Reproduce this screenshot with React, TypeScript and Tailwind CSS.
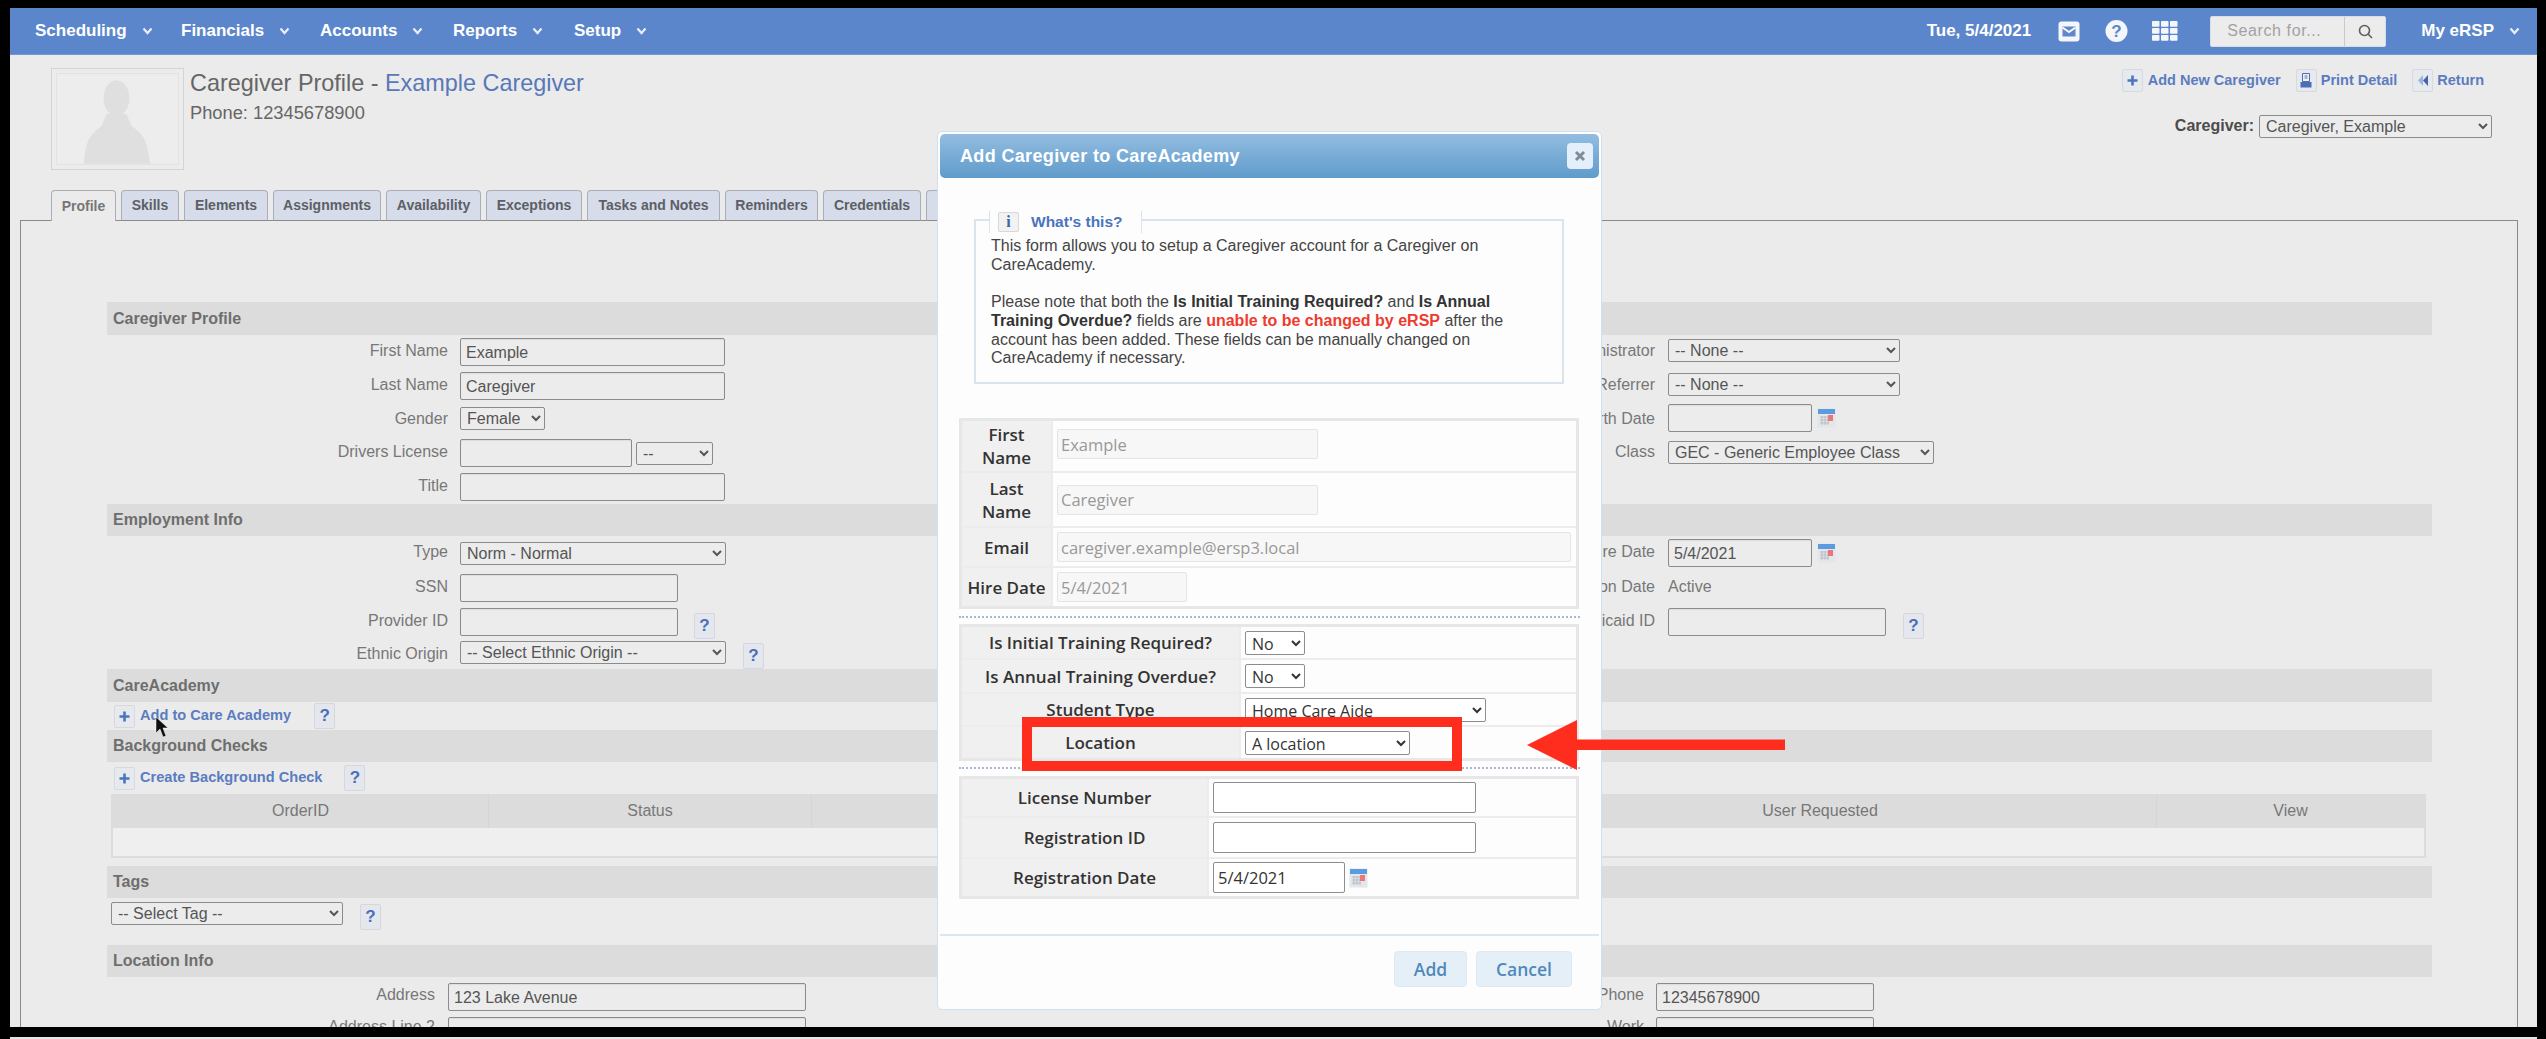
import React from "react";

const Chev = ({ c = "#fff" }: { c?: string }) => (
  <svg width="11" height="8" viewBox="0 0 11 8" className="ml-[15px]">
    <polyline points="1.5,1.5 5.5,6 9.5,1.5" fill="none" stroke={c} strokeWidth="2.2" />
  </svg>
);

const NavItem = ({ t, w }: { t: string; w: string }) => (
  <div className={`flex items-center font-bold text-[17px] text-white ${w}`}>
    <span>{t}</span>
    <Chev c="#e8eef8" />
  </div>
);

const Tab = ({ t, w, active }: { t: string; w: string; active?: boolean }) => (
  <div
    className={`${w} h-[31px] -mb-px flex items-center justify-center rounded-t-[4px] border border-[#a9adb5] text-[14px] font-bold relative ${
      active ? "bg-[#ebebeb] border-b-0 text-[#777] z-10" : "bg-[#d6dce9] border-b-[#8a8a8a] text-[#5c5f66]"
    }`}
  >
    {t}
  </div>
);

const Help = ({ cls = "" }: { cls?: string }) => (
  <span className={`w-[21px] h-[26px] flex items-center justify-center rounded-[2px] border border-[#d4d8de] bg-[#e4e8ee] text-[#4a6fb8] font-bold text-[17px] ${cls}`}>?</span>
);

const PlusBtn = () => (
  <span className="w-[21px] h-[23px] flex items-center justify-center rounded-[2px] border border-[#d6d9de] bg-[#e6e9ee]">
    <svg width="11" height="11" viewBox="0 0 11 11">
      <path d="M4.2 0.5h2.6v3.7h3.7v2.6h-3.7v3.7h-2.6v-3.7h-3.7v-2.6h3.7z" fill="#4a75c0" />
    </svg>
  </span>
);

const Cal = ({ cls = "" }: { cls?: string }) => (
  <svg width="19" height="20" viewBox="0 0 19 20" className={cls}>
    <rect x="0.5" y="0.5" width="18" height="19" fill="#e4e6ea" />
    <rect x="1" y="1" width="17" height="5" fill="#5b9be0" />
    <path d="M3 9h9M3 12h9M3 15h9M5 8v9M8 8v9M11 8v9" stroke="#b9bdc4" strokeWidth="1" />
    <rect x="11" y="7" width="5" height="6" fill="#e8787a" />
  </svg>
);

const Inp = ({ v = "", w, cls = "" }: { v?: string; w: string; cls?: string }) => (
  <input
    readOnly
    defaultValue={v}
    className={`${w} h-[28px] px-[5px] pt-[2px] border border-[#8b8b8b] rounded-[2px] bg-[#ececec] text-[16px] text-[#555] shadow-[inset_0_1px_1px_#ddd] ${cls}`}
  />
);

const Sel = ({ v, w, cls = "" }: { v: string; w: string; cls?: string }) => (
  <select
    defaultValue={v}
    className={`${w} h-[23px] pl-[2px] border border-[#8b8b8b] rounded-[2px] bg-[#ececec] text-[16px] text-[#555] ${cls}`}
  >
    <option>{v}</option>
  </select>
);

const Section = ({ t, h = "h-[32px]" }: { t: string; h?: string }) => (
  <div className={`${h} bg-[#dcdcdc] pl-[6px] flex items-center text-[16px] font-bold text-[#6e6e6e] shrink-0`}>{t}</div>
);

const Row = ({
  h,
  label,
  ctl,
  rlabel,
  rctl,
  lp = "pt-[5px]",
}: {
  h: string;
  label?: string;
  ctl?: React.ReactNode;
  rlabel?: string;
  rctl?: React.ReactNode;
  lp?: string;
}) => (
  <div className={`${h} flex shrink-0`}>
    <div className={`w-[341px] text-right text-[16px] text-[#777] leading-[22px] ${lp}`}>{label}</div>
    <div className="w-[755px] ml-[12px] flex items-start gap-[4px]">{ctl}</div>
    <div className={`w-[440px] text-right text-[16px] text-[#777] leading-[22px] whitespace-nowrap ${lp}`}>{rlabel}</div>
    <div className="ml-[13px] flex items-start">{rctl}</div>
  </div>
);

const MLabel = ({ w, children }: { w: string; children: React.ReactNode }) => (
  <div className={`${w} bg-[#f0f0f0] flex items-center justify-center text-center font-['Open_Sans',sans-serif] font-semibold text-[17px] leading-[23px] text-[#333] shrink-0 whitespace-nowrap`}>
    {children}
  </div>
);

const MInp = ({ v, w, cls = "" }: { v: string; w: string; cls?: string }) => (
  <input
    readOnly
    defaultValue={v}
    className={`${w} h-[30px] px-[3px] rounded-[2px] border border-[#e4e4e4] bg-[#f7f7f7] font-['Open_Sans',sans-serif] text-[16.5px] text-[#999] ${cls}`}
  />
);

const MSel = ({ v, w }: { v: string; w: string }) => (
  <select
    defaultValue={v}
    className={`${w} h-[24px] pl-[2px] border border-[#8d8d8d] rounded-[2px] bg-white font-['Open_Sans',sans-serif] text-[16px] text-[#333]`}
  >
    <option>{v}</option>
  </select>
);

const EditInp = ({ v = "", w }: { v?: string; w: string }) => (
  <input
    readOnly
    defaultValue={v}
    className={`${w} h-[31px] px-[4px] rounded-[2px] border border-[#8d8d8d] bg-white font-['Open_Sans',sans-serif] text-[16.5px] text-[#333]`}
  />
);

const Mrow = ({ h, label, lw, children, last }: { h: string; label: React.ReactNode; lw: string; children: React.ReactNode; last?: boolean }) => (
  <div className={`${h} flex ${last ? "" : "border-b-2 border-[#ececec]"}`}>
    <MLabel w={lw}>{label}</MLabel>
    <div className="flex-1 flex items-center pl-[4px] bg-[#fdfdfd] border-l-2 border-[#ececec]">{children}</div>
  </div>
);

export default function App() {
  return (
    <div className="relative w-[2546px] h-[1039px] overflow-hidden bg-black pt-[8px] pl-[10px] pr-[9px] font-['Liberation_Sans',Arial,sans-serif]">
      <div className="w-full h-[1019px] bg-[#ebebeb] overflow-hidden flex flex-col">
        {/* top bar */}
        <header className="h-[47px] shrink-0 bg-[#5b86cc] flex items-center pl-[25px] pr-[17px] border-b border-[#6f97d4]">
          <NavItem t="Scheduling" w="w-[146px]" />
          <NavItem t="Financials" w="w-[139px]" />
          <NavItem t="Accounts" w="w-[133px]" />
          <NavItem t="Reports" w="w-[121px]" />
          <NavItem t="Setup" w="w-[80px]" />
          <div className="ml-auto flex items-center">
            <span className="font-bold text-[17px] text-white">Tue, 5/4/2021</span>
            <svg width="22" height="21" viewBox="0 0 22 21" className="ml-[27px]">
              <rect x="0.5" y="0.5" width="21" height="20" rx="3" fill="#f4f6fa" />
              <path d="M4.5 5.5h13v10h-13z" fill="#5f88cc" />
              <path d="M4.5 6.5l6.5 4.5 6.5-4.5" fill="none" stroke="#f4f6fa" strokeWidth="2" />
            </svg>
            <svg width="23" height="24" viewBox="0 0 23 24" className="ml-[25px]">
              <circle cx="11.5" cy="12" r="11" fill="#f4f6fa" />
              <text x="11.5" y="18" textAnchor="middle" fontSize="17" fontWeight="700" fill="#5b86cc" fontFamily="Liberation Sans">?</text>
            </svg>
            <svg width="26" height="20" viewBox="0 0 26 20" className="ml-[24px]">
              {[0, 7, 14].map((y) =>
                [0, 9, 18].map((x) => <rect key={`${x}-${y}`} x={x} y={y} width="7.5" height="5.8" rx="0.8" fill="#f4f6fa" />)
              )}
            </svg>
            <div className="ml-[32px] w-[176px] h-[31px] bg-[#ececec] rounded-[2px] flex items-center border border-[#d7dde8]">
              <span className="w-[133px] pl-[16px] text-[16px] text-[#a2a2a2] tracking-[0.6px]">Search for...</span>
              <span className="flex-1 h-full border-l border-[#c9c9c9] flex items-center justify-center">
                <svg width="15" height="15" viewBox="0 0 15 15">
                  <circle cx="6.5" cy="6.5" r="5" fill="none" stroke="#5e5e5e" strokeWidth="1.6" />
                  <path d="M10 10l4 4" stroke="#5e5e5e" strokeWidth="1.6" />
                </svg>
              </span>
            </div>
            <span className="ml-[35px] font-bold text-[17px] text-white">My eRSP</span>
            <Chev c="#e8eef8" />
          </div>
        </header>

        {/* heading */}
        <div className="h-[135px] shrink-0 flex pl-[41px] pr-[45px]">
          <div className="mt-[13px] w-[133px] h-[102px] border border-[#d4d4d4] p-[4px] bg-[#ececec]">
            <div className="w-full h-full border border-[#e2e2e2] overflow-hidden flex justify-center">
              <svg width="122" height="90" viewBox="0 0 122 90">
                <rect width="122" height="90" fill="#ededed" />
                <ellipse cx="60" cy="24" rx="13" ry="18" fill="#dfdfdf" />
                <path d="M27 90C29 70 31 62 45 52L50 40H70L75 52C90 62 91 70 94 90z" fill="#dfdfdf" />
              </svg>
            </div>
          </div>
          <div className="ml-[6px] pt-[14px]">
            <div className="text-[23.4px] leading-[28px] text-[#666] whitespace-nowrap">
              Caregiver Profile - <span className="text-[#5878b8]">Example Caregiver</span>
            </div>
            <div className="text-[18.3px] leading-[22px] text-[#666] mt-[5px]">Phone: 12345678900</div>
          </div>
          <div className="ml-auto flex flex-col items-end">
            <div className="mt-[14px] mr-[8px] flex items-center text-[14.5px] font-bold text-[#5b7cc0] whitespace-nowrap">
              <span className="mr-[5px]"><PlusBtn /></span>
              <span>Add New Caregiver</span>
              <span className="ml-[15px] mr-[4px] w-[21px] h-[23px] flex items-center justify-center rounded-[2px] border border-[#d6d9de] bg-[#e6e9ee]">
                <svg width="12" height="15" viewBox="0 0 12 15">
                  <path d="M2.5 0.5h7v8h-7z" fill="#f2f2f2" stroke="#4a6fb8" />
                  <path d="M4.5 3h3M4.5 5h3" stroke="#4a6fb8" />
                  <rect x="0.5" y="9" width="11" height="5.5" fill="#4a6fb8" />
                </svg>
              </span>
              <span>Print Detail</span>
              <span className="ml-[15px] mr-[4px] w-[21px] h-[23px] flex items-center justify-center rounded-[2px] border border-[#d6d9de] bg-[#e6e9ee]">
                <svg width="12" height="13" viewBox="0 0 12 13">
                  <path d="M6 1L1 6.5 6 12z" fill="#9fb4d8" />
                  <path d="M11 1L6 6.5l5 5.5z" fill="#3f66ad" />
                </svg>
              </span>
              <span>Return</span>
            </div>
            <div className="mt-[22px] flex items-center">
              <span className="text-[16px] font-bold text-[#4c4c4c]">Caregiver:</span>
              <Sel v="Caregiver, Example" w="w-[233px]" cls="ml-[5px]" />
            </div>
          </div>
        </div>

        {/* tabs */}
        <div className="h-[30px] shrink-0 flex gap-[5px] pl-[41px] relative z-10 overflow-visible">
          <Tab t="Profile" w="w-[65px]" active />
          <Tab t="Skills" w="w-[58px]" />
          <Tab t="Elements" w="w-[84px]" />
          <Tab t="Assignments" w="w-[108px]" />
          <Tab t="Availability" w="w-[95px]" />
          <Tab t="Exceptions" w="w-[96px]" />
          <Tab t="Tasks and Notes" w="w-[133px]" />
          <Tab t="Reminders" w="w-[93px]" />
          <Tab t="Credentials" w="w-[98px]" />
          <Tab t="Documents" w="w-[98px]" />
        </div>

        {/* panel */}
        <div className="flex-1 ml-[10px] mr-[19px] border-x border-t border-[#8a8a8a] pt-[81px] pl-[86px] pr-[85px] overflow-hidden flex flex-col min-h-0">
          <Section t="Caregiver Profile" h="h-[33px]" />
          <Row h="h-[34px]" label="First Name" ctl={<Inp v="Example" w="w-[265px]" cls="mt-[3px]" />} rlabel="Administrator" rctl={<Sel v="-- None --" w="w-[232px]" cls="mt-[4px]" />} />
          <Row h="h-[34px]" label="Last Name" ctl={<Inp v="Caregiver" w="w-[265px]" cls="mt-[3px]" />} rlabel="Referrer" rctl={<Sel v="-- None --" w="w-[232px]" cls="mt-[4px]" />} />
          <Row h="h-[33px]" label="Gender" ctl={<Sel v="Female" w="w-[85px]" cls="mt-[4px]" />} rlabel="Birth Date" rctl={<><Inp w="w-[144px]" cls="mt-[1px]" /><Cal cls="ml-[5px] mt-[5px]" /></>} />
          <Row h="h-[34px]" label="Drivers License" ctl={<><Inp w="w-[172px]" cls="mt-[3px]" /><Sel v="--" w="w-[77px]" cls="mt-[6px]" /></>} rlabel="Class" rctl={<Sel v="GEC - Generic Employee Class" w="w-[266px]" cls="mt-[5px]" />} />
          <Row h="h-[34px]" label="Title" ctl={<Inp w="w-[265px]" cls="mt-[3px]" />} />
          <Section t="Employment Info" />
          <Row h="h-[33px]" label="Type" ctl={<Sel v="Norm - Normal" w="w-[266px]" cls="mt-[6px]" />} rlabel="Hire Date" rctl={<><Inp v="5/4/2021" w="w-[144px]" cls="mt-[3px]" /><Cal cls="ml-[5px] mt-[7px]" /></>} />
          <Row h="h-[35px]" lp="pt-[7px]" label="SSN" ctl={<Inp w="w-[218px]" cls="mt-[5px]" />} rlabel="Termination Date" rctl={<span className="text-[16px] text-[#777] pt-[7px] leading-[22px]">Active</span>} />
          <Row h="h-[34px]" lp="pt-[6px]" label="Provider ID" ctl={<><Inp w="w-[218px]" cls="mt-[4px]" /><Help cls="ml-[12px] mt-[9px]" /></>} rlabel="Medicaid ID" rctl={<><Inp w="w-[218px]" cls="mt-[4px]" /><Help cls="ml-[17px] mt-[9px]" /></>} />
          <Row h="h-[31px]" label="Ethnic Origin" ctl={<><Sel v="-- Select Ethnic Origin --" w="w-[266px]" cls="mt-[3px]" /><Help cls="ml-[13px] mt-[5px]" /></>} />
          <Section t="CareAcademy" h="h-[33px]" />
          <div className="h-[28px] shrink-0 flex items-center pl-[7px] text-[14.6px] font-bold text-[#5b7cc0]">
            <PlusBtn />
            <span className="ml-[5px]">Add to Care Academy</span>
            <Help cls="ml-[23px]" />
          </div>
          <Section t="Background Checks" />
          <div className="h-[32px] shrink-0 flex items-center pl-[7px] text-[14.6px] font-bold text-[#5b7cc0]">
            <PlusBtn />
            <span className="ml-[5px]">Create Background Check</span>
            <Help cls="ml-[22px]" />
          </div>
          <div className="ml-[4px] w-[2315px] h-[64px] shrink-0 flex flex-col border-x-2 border-b-2 border-[#dcdcdc]">
            <div className="h-[34px] bg-[#dcdcdc] flex text-[16px] text-[#777]">
              <div className="w-[375px] flex items-center justify-center">OrderID</div>
              <div className="w-[323px] flex items-center justify-center border-l border-[#d6d6d6]">Status</div>
              <div className="w-[336px] flex items-center justify-center border-l border-[#d6d6d6]">Date</div>
              <div className="w-[336px] flex items-center justify-center border-l border-[#d6d6d6]">Type</div>
              <div className="w-[673px] flex items-center justify-center border-l border-[#d6d6d6]">User Requested</div>
              <div className="flex-1 flex items-center justify-center border-l border-[#d6d6d6]">View</div>
            </div>
            <div className="flex-1 bg-[#efefef]" />
          </div>
          <div className="h-[8px] shrink-0" />
          <Section t="Tags" />
          <div className="h-[47px] shrink-0 flex items-start pl-[4px] pt-[4px]">
            <Sel v="-- Select Tag --" w="w-[232px]" />
            <Help cls="ml-[17px] mt-[2px]" />
          </div>
          <Section t="Location Info" />
          <div className="h-[36px] flex shrink-0">
            <div className="w-[328px] text-right text-[16px] text-[#777] pt-[7px] leading-[22px]">Address</div>
            <div className="w-[1185px] ml-[13px] pt-[6px]"><Inp v="123 Lake Avenue" w="w-[358px]" /></div>
            <div className="w-[11px] shrink-0" />
            <div className="w-[0px] flex justify-end text-[16px] text-[#777] pt-[7px] leading-[22px] whitespace-nowrap">Phone</div>
            <div className="ml-[12px] pt-[6px]"><Inp v="12345678900" w="w-[218px]" /></div>
          </div>
          <div className="h-[40px] flex shrink-0">
            <div className="w-[328px] text-right text-[16px] text-[#777] pt-[3px] leading-[22px]">Address Line 2</div>
            <div className="w-[1185px] ml-[13px] pt-[4px]"><Inp w="w-[358px]" /></div>
            <div className="w-[11px] shrink-0" />
            <div className="w-[0px] flex justify-end text-[16px] text-[#777] pt-[3px] leading-[22px]">Work</div>
            <div className="ml-[12px] pt-[4px]"><Inp w="w-[218px]" /></div>
          </div>
        </div>
      </div>

      {/* strip of the page visible under the black band */}
      <div className="mt-[10px] h-[2px] bg-[#e4e4e4]" />

      {/* mouse pointer */}
      <svg width="14" height="22" viewBox="0 0 14 22" className="absolute left-[155px] top-[716px]">
        <path d="M1 1v16l4-4 3 8 3-1-3-8h5z" fill="#111" stroke="#fff" strokeWidth="0.5" />
      </svg>

      {/* modal */}
      <div className="absolute z-20 left-[937px] top-[131px] w-[665px] h-[879px] bg-[#fdfdfd] rounded-[5px] border border-[#cfe0ef] pt-[2px] px-[2px]">
        <div className="h-[44px] rounded-[5px] bg-gradient-to-b from-[#93bde1] to-[#5f9bcb] flex items-center pl-[20px] pr-[6px] justify-between">
          <span className="text-[18px] font-bold text-white tracking-[0.35px]">Add Caregiver to CareAcademy</span>
          <span className="w-[26px] h-[26px] rounded-[4px] bg-[#e3effa] flex items-center justify-center">
            <svg width="12" height="12" viewBox="0 0 12 12">
              <path d="M2 2l8 8M10 2l-8 8" stroke="#7f8c9a" strokeWidth="3" />
            </svg>
          </span>
        </div>

        <div className="relative ml-[34px] mt-[41px] w-[590px] h-[165px] border-2 border-[#dbe3ee] pl-[15px] pt-[16px]">
          <div className="absolute left-[13px] -top-[10px] w-[153px] h-[22px] bg-[#fdfdfd] border-x border-[#dbe3ee] flex items-center pl-[8px]">
            <span className="w-[21px] h-[20px] rounded-[2px] border border-[#d8d8d8] bg-[#f2f2f2] flex items-center justify-center font-['Liberation_Serif',serif] font-bold text-[16px] text-[#3d63ad]">i</span>
            <span className="ml-[12px] font-bold text-[15.5px] text-[#4a74bd]">What&apos;s this?</span>
          </div>
          <p className="w-[525px] text-[16px] leading-[18.7px] text-[#444]">
            This form allows you to setup a Caregiver account for a Caregiver on CareAcademy.
            <br />
            <br />
            Please note that both the <b className="text-[#333]">Is Initial Training Required?</b> and <b className="text-[#333]">Is Annual Training Overdue?</b> fields are <b className="text-[#ee3b2f]">unable to be changed by eRSP</b> after the account has been added. These fields can be manually changed on CareAcademy if necessary.
          </p>
        </div>

        <div className="ml-[19px] mt-[34px] w-[620px] border-[3px] border-[#e7e7e7] flex flex-col h-[191px]">
          <Mrow h="h-[52px]" lw="w-[89px]" label={<>First<br />Name</>}><MInp v="Example" w="w-[261px]" cls="-mt-[4px]" /></Mrow>
          <Mrow h="h-[55px]" lw="w-[89px]" label={<>Last<br />Name</>}><MInp v="Caregiver" w="w-[261px]" /></Mrow>
          <Mrow h="h-[40px]" lw="w-[89px]" label="Email"><MInp v="caregiver.example@ersp3.local" w="w-[514px]" /></Mrow>
          <Mrow h="h-[38px]" lw="w-[89px]" label="Hire Date" last><MInp v="5/4/2021" w="w-[130px]" /></Mrow>
        </div>

        <div className="ml-[19px] mt-[7px] w-[621px] border-t-2 border-dotted border-[#a6b8d2]" />

        <div className="ml-[19px] mt-[6px] w-[620px] h-[137px] border-[3px] border-[#e7e7e7] flex flex-col">
          <Mrow h="h-[33px]" lw="w-[277px]" label="Is Initial Training Required?"><MSel v="No" w="w-[60px]" /></Mrow>
          <Mrow h="h-[34px]" lw="w-[277px]" label="Is Annual Training Overdue?"><MSel v="No" w="w-[60px]" /></Mrow>
          <Mrow h="h-[33px]" lw="w-[277px]" label="Student Type"><MSel v="Home Care Aide" w="w-[241px]" /></Mrow>
          <Mrow h="h-[31px]" lw="w-[277px]" label="Location" last><MSel v="A location" w="w-[165px]" /></Mrow>
        </div>

        <div className="ml-[19px] mt-[6px] w-[621px] border-t-2 border-dotted border-[#a6b8d2]" />

        <div className="ml-[19px] mt-[7px] w-[620px] h-[123px] border-[3px] border-[#e7e7e7] flex flex-col">
          <Mrow h="h-[39px]" lw="w-[245px]" label="License Number"><EditInp w="w-[263px]" /></Mrow>
          <Mrow h="h-[41px]" lw="w-[245px]" label="Registration ID"><EditInp w="w-[263px]" /></Mrow>
          <Mrow h="h-[37px]" lw="w-[245px]" label="Registration Date" last>
            <EditInp v="5/4/2021" w="w-[132px]" />
            <Cal cls="ml-[4px]" />
          </Mrow>
        </div>

        <div className="mt-[35px] border-t-2 border-[#dbe6f0]" />

        <div className="mt-[15px] flex justify-end gap-[9px] pr-[27px]">
          <button className="w-[73px] h-[36px] rounded-[4px] bg-[#e5eff8] border border-[#dfe9f3] font-['Open_Sans',sans-serif] font-semibold text-[17.5px] text-[#4f89ba]">Add</button>
          <button className="w-[96px] h-[36px] rounded-[4px] bg-[#e5eff8] border border-[#dfe9f3] font-['Open_Sans',sans-serif] font-semibold text-[17.5px] text-[#4f89ba]">Cancel</button>
        </div>
      </div>

      {/* annotation */}
      <div className="absolute z-30 left-[1022px] top-[717px] w-[440px] h-[54px] border-[10px] border-[#ff2d1e]" />
      <svg width="258" height="50" viewBox="0 0 258 50" className="absolute z-30 left-[1527px] top-[720px]">
        <path d="M0 25L50 0V19.5H258V30H50V50z" fill="#ff2d1e" />
      </svg>
    </div>
  );
}
